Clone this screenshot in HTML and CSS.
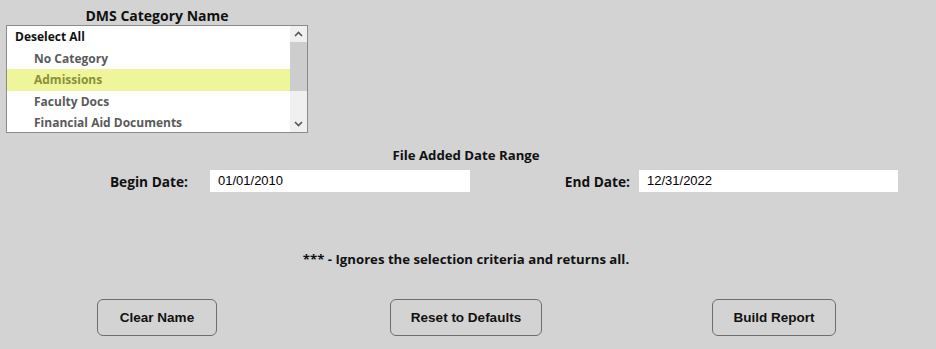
FILE: index.html
```html
<!DOCTYPE html>
<html>
<head>
<meta charset="utf-8">
<link rel="stylesheet" href="styles.css">
</head>
<body>
<div class="page">
  <div class="cat">
    <div class="cat-title">DMS Category Name</div>
    <div class="listbox">
      <div class="items">
        <div class="item head">Deselect All</div>
        <div class="item">No Category</div>
        <div class="item sel">Admissions</div>
        <div class="item">Faculty Docs</div>
        <div class="item">Financial Aid Documents</div>
      </div>
      <div class="sbar">
        <div class="sbtn"><svg width="9" height="6" viewBox="0 0 9 6"><path d="M1 5 L4.5 1.5 L8 5" fill="none" stroke="#555" stroke-width="1.6"/></svg></div>
        <div class="track"><div class="thumb"></div></div>
        <div class="sbtn"><svg width="9" height="6" viewBox="0 0 9 6"><path d="M1 1 L4.5 4.5 L8 1" fill="none" stroke="#555" stroke-width="1.6"/></svg></div>
      </div>
    </div>
  </div>

  <div class="range-title">File Added Date Range</div>
  <div class="dates">
    <label class="lbl begin">Begin Date:</label>
    <div class="inp in-begin">01/01/2010</div>
    <label class="lbl end">End Date:</label>
    <div class="inp in-end">12/31/2022</div>
  </div>

  <div class="note">*** - Ignores the selection criteria and returns all.</div>

  <div class="buttons">
    <button class="btn b-clear">Clear Name</button>
    <button class="btn b-reset">Reset to Defaults</button>
    <button class="btn b-build">Build Report</button>
  </div>
</div>
</body>
</html>
```

FILE: styles.css
```css
html, body {
  margin: 0;
  padding: 0;
  background: #d3d3d3;
}
.page {
  width: 936px;
  height: 349px;
  font-family: "Open Sans", Lato, sans-serif;
  font-weight: 700;
  font-size: 13.2px;
  color: #111;
  overflow: hidden;
}
.cat {
  margin-left: 6px;
  padding-top: 7px;
  width: 302px;
}
.cat-title {
  text-align: center;
  height: 18px;
  line-height: 18px;
  font-size: 14px;
}
.listbox {
  display: flex;
  height: 106px;
  border: 1px solid #8a8a8a;
  background: #fff;
}
.items {
  flex: 1;
}
.item {
  height: 21.5px;
  line-height: 21.5px;
  padding-left: 27px;
  color: #5a5a5a;
  font-size: 12px;
}
.item.head {
  padding-left: 8px;
  color: #111;
}
.item.sel {
  background: #eef59b;
  color: #8c8f3a;
}
.sbar {
  width: 17px;
  display: flex;
  flex-direction: column;
  background: #f0f0f0;
}
.sbtn {
  height: 16px;
  display: flex;
  align-items: center;
  justify-content: center;
}
.track {
  flex: 1;
}
.thumb {
  height: 49px;
  background: #cdcdcd;
}
.range-title {
  text-align: center;
  margin-top: 13px;
  height: 18px;
  line-height: 18px;
  padding-right: 4px;
}
.dates {
  display: flex;
  align-items: center;
  margin-top: 6px;
  height: 22px;
}
.lbl {
  text-align: right;
  font-size: 13.7px;
}
.begin {
  width: 188px;
  margin-right: 22px;
}
.end {
  width: 160px;
  margin-right: 9px;
}
.inp {
  background: #fff;
  height: 22px;
  line-height: 22px;
  padding-left: 8px;
  box-sizing: border-box;
  font-family: "Liberation Sans", Arial, sans-serif;
  font-weight: 400;
  font-size: 13px;
  color: #000;
}
.in-begin { width: 260px; }
.in-end { width: 259px; }
.note {
  text-align: center;
  margin-top: 57px;
  height: 20px;
  line-height: 20px;
  padding-right: 4px;
}
.buttons {
  display: flex;
  margin-top: 30px;
}
.btn {
  height: 37px;
  box-sizing: border-box;
  border: 1px solid #6e6e6e;
  border-radius: 6px;
  background: #d3d3d3;
  font-family: "Liberation Sans", Arial, sans-serif;
  font-weight: 700;
  font-size: 13.5px;
  color: #111;
  padding: 0;
}
.b-clear { width: 120px; margin-left: 97px; }
.b-reset { width: 152px; margin-left: 173px; }
.b-build { width: 124px; margin-left: 170px; }
```
